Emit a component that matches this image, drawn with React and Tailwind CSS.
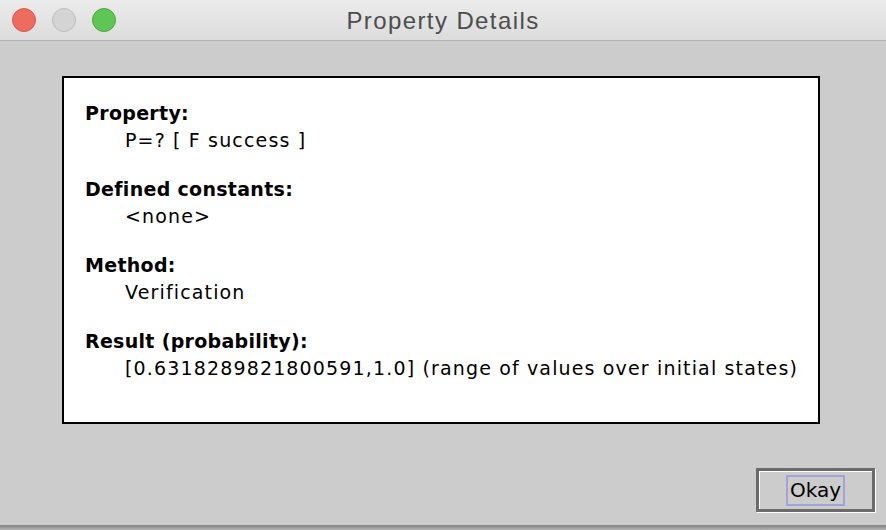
import React from "react";

const groups = [
  { label: "Property:", value: "P=? [ F success ]" },
  { label: "Defined constants:", value: "<none>" },
  { label: "Method:", value: "Verification" },
  {
    label: "Result (probability):",
    value: "[0.6318289821800591,1.0] (range of values over initial states)",
  },
];

export default function App() {
  return (
    <div className="w-[886px] h-[530px] bg-[#cccccc] overflow-hidden flex flex-col">
      <div className="h-[525px] flex flex-col">
        {/* Title bar */}
        <div className="h-[41px] shrink-0 grid grid-cols-[1fr_auto_1fr] items-center bg-gradient-to-b from-[#ececec] to-[#dcdcdc] border-b border-[#b3b3b3]">
          <div className="flex items-center gap-[16px] pl-[12px]">
            <span className="w-[24px] h-[24px] rounded-full bg-[#ee6b60] border border-[#d65a4f]" />
            <span className="w-[24px] h-[24px] rounded-full bg-[#d4d4d4] border border-[#bcbcbc]" />
            <span className="w-[24px] h-[24px] rounded-full bg-[#5fc554] border border-[#4ca741]" />
          </div>
          <div
            className="text-[24px] leading-none text-[#4d4d4d] tracking-[1.4px] pt-[2px]"
            style={{ fontFamily: '"Liberation Sans", Arial, sans-serif' }}
          >
            Property Details
          </div>
          <div />
        </div>

        {/* Body */}
        <div className="flex-1 flex flex-col pt-[35px]">
          <div className="ml-[62px] mr-[66px] h-[348px] border-2 border-black bg-white pl-[21px] pt-[22px]">
            {groups.map((g) => (
              <div key={g.label} className="mb-[22px]" style={{ fontFamily: '"DejaVu Sans", sans-serif' }}>
                <div className="h-[27px] leading-[27px] text-[19px] font-bold text-black tracking-[0.3px] whitespace-nowrap">
                  {g.label}
                </div>
                <div className="h-[27px] leading-[27px] text-[19px] text-black tracking-[1.15px] pl-[40px] whitespace-nowrap">
                  {g.value}
                </div>
              </div>
            ))}
          </div>

          <div className="flex justify-end pr-[11px] mt-[44px]">
            <div className="w-[119px] h-[44px] border-[3px] border-[#6b6b6b] shadow-[inset_1px_1px_0_#ffffff,1px_1px_0_#ffffff] flex items-center justify-center">
              <span
                className="border-2 border-[#a3a3d8] h-[31px] px-[2px] flex items-center text-[20px] text-black"
                style={{ fontFamily: '"DejaVu Sans", sans-serif' }}
              >
                Okay
              </span>
            </div>
          </div>
        </div>
      </div>
      <div className="h-[5px] bg-gradient-to-b from-[#7f7f7f] to-[#b5b5b5]" />
    </div>
  );
}
